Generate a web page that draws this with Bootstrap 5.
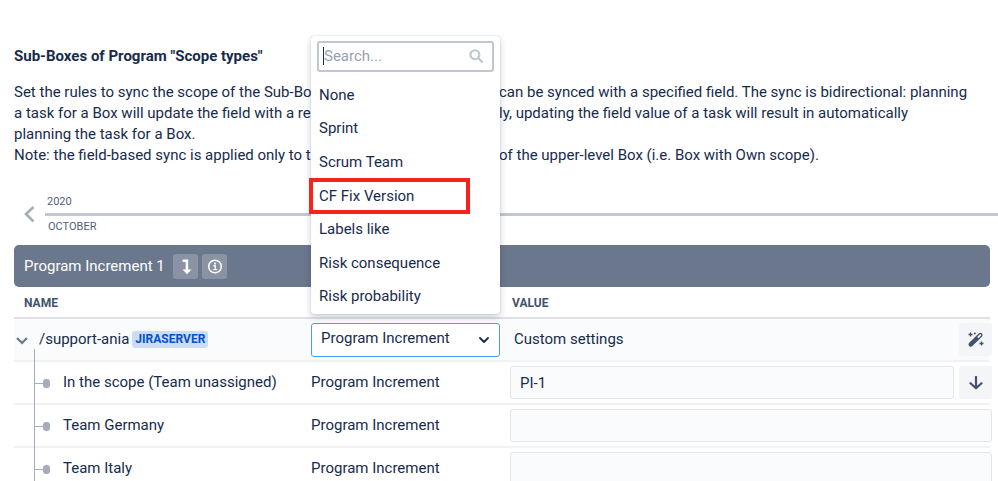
<!DOCTYPE html>
<html lang="en">
<head>
<meta charset="utf-8">
<meta name="viewport" content="width=device-width, initial-scale=1">
<title>Sub-Boxes of Program</title>
<link href="https://cdn.jsdelivr.net/npm/bootstrap@5.3.0/dist/css/bootstrap.min.css" rel="stylesheet">
<style>
  body { font-family: Roboto, "Liberation Sans", sans-serif; font-size: 15px; line-height: 21px; color: #172b4d; overflow-x: hidden; }
  .page { padding: 46px 0 0 14px; height: 100vh; overflow: hidden; }
  .page-title { font-size: 15px; line-height: 21px; font-weight: 700; margin-bottom: 15px; }
  .intro { display: grid; grid-template-columns: 485px 1fr; margin-bottom: 28px; white-space: nowrap; }

  .timeline { padding-left: 10px; gap: 10px; color: #505f79; font-size: 11px; line-height: 16px; }
  .timeline-track { border-top: 3px solid #c1c7d0; margin: 3px 0; }
  .timeline-year { padding-left: 2px; }
  .timeline-month { padding-left: 3px; }
  .plain-btn { background: none; border: 0; padding: 0; line-height: 0; }

  .main-area { margin-right: 8px; }
  .program-bar { background: #6b778c; border-radius: 5px; color: #fff; height: 42px; padding: 0 10px; margin-top: 10px; }
  .bar-btn { background: #8993a4; border: 0; border-radius: 3px; width: 25px; height: 25px; padding: 0; line-height: 0; }

  .scope-table { table-layout: fixed; width: 100%; border-collapse: separate; border-spacing: 0; }
  .scope-table th { height: 32px; padding: 2px 0 0; font-size: 12px; line-height: 16px; font-weight: 700; color: #42526e; border-bottom: 2px solid #dfe1e6; }
  .scope-table td { height: 43px; padding: 0; border-bottom: 2px solid #f1f2f4; vertical-align: middle; }
  .scope-table .group-row td { background: #fafbfc; }
  .col-name { width: 297px; }
  .col-field { width: 199px; }
  .scope-table th:first-child { padding-left: 10px; }
  .scope-table th:last-child { padding-left: 2px; }

  .tag { background: #cddcf5; color: #0052cc; font-size: 12px; line-height: 17px; font-weight: 700; border-radius: 3px; padding: 0 3px; }
  .name-line { gap: 3px; }
  .tree-cell { height: 41px; padding-left: 49px; position: relative; }
  .tree-cell svg { position: absolute; left: 19px; top: 0; }
  .root-cell { height: 41px; position: relative; padding-left: 2px; gap: 11px; }
  .root-cell .stem { position: absolute; left: 20px; bottom: -2px; width: 1px; height: 13px; background: #a5adba; }

  .field-select { width: 189px; height: 34px; padding: 0 30px 2px 9px; font-size: 15px; line-height: 21px; color: #172b4d; border: 1px solid #4c9aff; border-radius: 3px; box-shadow: none;
    background-color: #fff; background-position: right 9px center; background-size: 12px 12px;
    background-image: url("data:image/svg+xml,%3Csvg xmlns='http://www.w3.org/2000/svg' viewBox='0 0 12 12'%3E%3Cpath d='M2 4l4 4 4-4' fill='none' stroke='%23172b4d' stroke-width='1.8' stroke-linecap='round' stroke-linejoin='round'/%3E%3C/svg%3E"); }
  .options-menu { position: absolute; left: 0; bottom: 43px; width: 189px; background: #fff; border-radius: 3px; box-shadow: 0 0 1px rgba(9,30,66,.3), 0 3px 7px rgba(9,30,66,.22); z-index: 5; padding: 5px 6px 0; }
  .search-box { height: 31px; border: 2px solid #c1c7d0; border-radius: 3px; padding: 0 9px 0 4px; }
  .search-box input { width: 100%; min-width: 0; border: 0; outline: 0; padding: 0; background: none; font-size: 15px; line-height: 21px; color: #172b4d; }
  .search-box input::placeholder { color: #97a0af; opacity: 1; }
  .search-box .caret { width: 1px; height: 18px; background: #172b4d; flex: none; }
  .options { height: 235px; margin-top: 7px; }
  .options a { color: #172b4d; text-decoration: none; padding-left: 2px; }
  .callout-frame { position: absolute; inset: -1px 24px -1px -8px; border: 4px solid #f8241b; pointer-events: none; }

  .value-cell { margin-right: -2px; gap: 5px; }
  .value-input { height: 33px; padding: 0 9px; font-size: 15px; line-height: 21px; color: #172b4d; background: #fafbfc; border: 1px solid #e3e5ea; border-radius: 3px; }
  .tool-btn { flex: none; width: 33px; height: 33px; padding: 0; border: 0; border-radius: 3px; background: #f4f5f7; line-height: 0; }
</style>
</head>
<body>
<main class="page">
  <h1 class="page-title">Sub-Boxes of Program "Scope types"</h1>
  <div class="intro">
    <span>Set the rules to sync the scope of the Sub-Box</span><span>can be synced with a specified field. The sync is bidirectional: planning</span>
    <span>a task for a Box will update the field with a res</span><span>ly, updating the field value of a task will result in automatically</span>
    <span>planning the task for a Box.</span><span></span>
    <span>Note: the field-based sync is applied only to th</span><span>of the upper-level Box (i.e. Box with Own scope).</span>
  </div>

  <section class="timeline d-flex align-items-center">
    <button class="plain-btn" type="button" aria-label="Previous period">
      <svg width="11" height="18" viewBox="0 0 11 18" fill="none" stroke="#a5adba" stroke-width="2.6"><path d="M9.5 1 2 8l7.500 7.500"/></svg>
    </button>
    <div class="flex-grow-1">
      <div class="timeline-year">2020</div>
      <div class="timeline-track"></div>
      <div class="timeline-month">OCTOBER</div>
    </div>
  </section>

  <div class="main-area">
    <div class="program-bar d-flex align-items-center">
      <span>Program Increment 1</span>
      <button class="bar-btn ms-2" type="button" aria-label="Go down">
        <svg width="25" height="25" viewBox="0 0 25 25"><path d="M9.500 5.500H15.200V15.500h3.300L14 20.200 9.500 15.500H12.700V8H9.500z" fill="#fff"/></svg>
      </button>
      <button class="bar-btn ms-1" type="button" aria-label="Information">
        <svg width="25" height="25" viewBox="0 0 25 25"><circle cx="13" cy="12.500" r="6.300" fill="none" stroke="#fff" stroke-width="1.500"/><circle cx="13" cy="9.600" r="1.100" fill="#fff"/><path d="M11.300 11.700h1.900v3.800M11.200 15.600h3.700" fill="none" stroke="#fff" stroke-width="1.300"/></svg>
      </button>
    </div>

    <table class="scope-table">
      <colgroup><col class="col-name"><col class="col-field"><col></colgroup>
      <thead>
        <tr><th scope="col">NAME</th><th scope="col" aria-label="Field"></th><th scope="col">VALUE</th></tr>
      </thead>
      <tbody>
        <tr class="group-row">
          <td>
            <div class="root-cell d-flex align-items-center">
              <button class="plain-btn" type="button" aria-label="Collapse">
                <svg width="12" height="12" viewBox="0 0 12 12" fill="none" stroke="#6b778c" stroke-width="2.200"><path d="M1 4l5 5 5-5"/></svg>
              </button>
              <div class="name-line d-flex align-items-center"><span>/support-ania</span><span class="tag">JIRASERVER</span></div>
              <span class="stem"></span>
            </div>
          </td>
          <td>
            <div class="position-relative">
              <select class="form-select field-select" aria-label="Field">
                <option>Program Increment</option>
              </select>
              <div class="options-menu">
                <label class="search-box d-flex align-items-center">
                  <span class="caret"></span>
                  <input type="text" placeholder="Search..." aria-label="Search">
                  <svg width="16" height="16" viewBox="0 0 16 16" fill="none" stroke="#c1c7d0" stroke-width="2.400" stroke-linecap="round"><circle cx="6.500" cy="6.500" r="4.900"/><path d="M10.300 10.300l4.200 4.200"/></svg>
                </label>
                <div class="options d-flex flex-column">
                  <a href="#" class="flex-fill d-flex align-items-center">None</a>
                  <a href="#" class="flex-fill d-flex align-items-center">Sprint</a>
                  <a href="#" class="flex-fill d-flex align-items-center">Scrum Team</a>
                  <a href="#" class="flex-fill d-flex align-items-center position-relative">CF Fix Version<span class="callout-frame"></span></a>
                  <a href="#" class="flex-fill d-flex align-items-center">Labels like</a>
                  <a href="#" class="flex-fill d-flex align-items-center">Risk consequence</a>
                  <a href="#" class="flex-fill d-flex align-items-center">Risk probability</a>
                </div>
              </div>
            </div>
          </td>
          <td>
            <div class="value-cell d-flex align-items-center justify-content-between">
              <span class="ps-1">Custom settings</span>
              <button class="tool-btn" type="button" aria-label="Auto-fill">
                <svg width="18" height="18" viewBox="0 0 18 18"><path d="M3.800 13.300 13.300 4.200" stroke="#42526e" stroke-width="4.600" stroke-linecap="round"/><path d="M11.300 6.100l2-1.900" stroke="#f4f5f7" stroke-width="1.800" stroke-linecap="round"/><path d="M3.500 1.500v4M1.500 3.500h4M14.500 10.500v4M12.500 12.500h4" stroke="#42526e" stroke-width="1.400"/><circle cx="7.800" cy="2.400" r="1" fill="#42526e"/></svg>
              </button>
            </div>
          </td>
        </tr>
        <tr>
          <td><div class="tree-cell d-flex align-items-center"><svg width="18" height="43" viewBox="0 0 18 43"><path d="M1.500 0v43M1 21.500h11" stroke="#a5adba" fill="none"/><rect x="10" y="17" width="7" height="9" rx="3" fill="#a5adba"/></svg>In the scope (Team unassigned)</div></td>
          <td>Program Increment</td>
          <td><div class="value-cell d-flex"><input class="form-control value-input" type="text" value="PI-1" aria-label="Value for In the scope">
            <button class="tool-btn" type="button" aria-label="Apply below">
              <svg width="14" height="14" viewBox="0 0 14 14" fill="none" stroke="#42526e" stroke-width="2.200" stroke-linecap="round" stroke-linejoin="round"><path d="M7 1v11M1.500 7.200l5.500 5 5.500-5"/></svg>
            </button></div></td>
        </tr>
        <tr>
          <td><div class="tree-cell d-flex align-items-center"><svg width="18" height="43" viewBox="0 0 18 43"><path d="M1.500 0v43M1 21.500h11" stroke="#a5adba" fill="none"/><rect x="10" y="17" width="7" height="9" rx="3" fill="#a5adba"/></svg>Team Germany</div></td>
          <td>Program Increment</td>
          <td><div class="value-cell d-flex"><input class="form-control value-input" type="text" aria-label="Value for Team Germany"></div></td>
        </tr>
        <tr>
          <td><div class="tree-cell d-flex align-items-center"><svg width="18" height="43" viewBox="0 0 18 43"><path d="M1.500 0v43M1 21.500h11" stroke="#a5adba" fill="none"/><rect x="10" y="17" width="7" height="9" rx="3" fill="#a5adba"/></svg>Team Italy</div></td>
          <td>Program Increment</td>
          <td><div class="value-cell d-flex"><input class="form-control value-input" type="text" aria-label="Value for Team Italy"></div></td>
        </tr>
      </tbody>
    </table>
  </div>
</main>
<script src="https://cdn.jsdelivr.net/npm/bootstrap@5.3.0/dist/js/bootstrap.bundle.min.js"></script>
</body>
</html>
